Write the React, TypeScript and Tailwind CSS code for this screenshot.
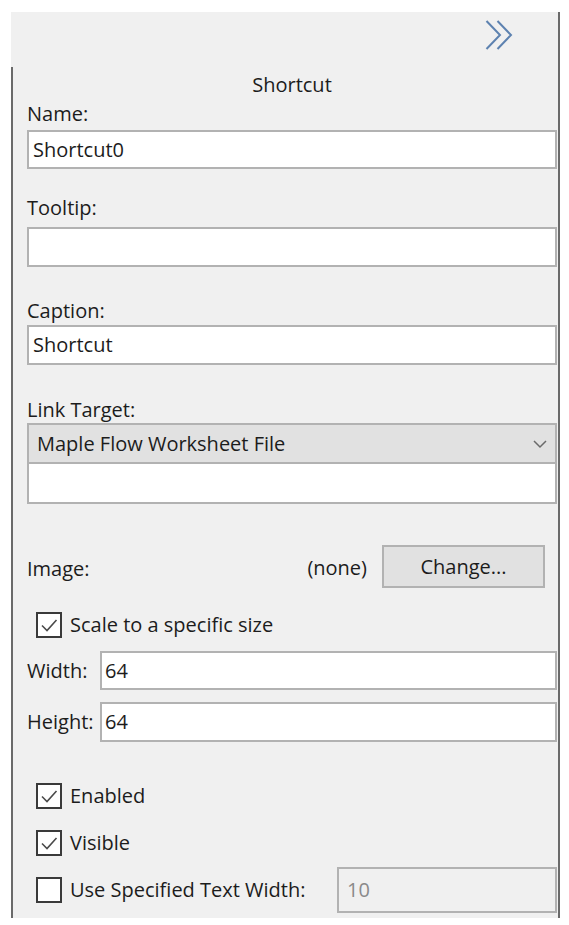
import React from "react";

const font = { fontFamily: '"Open Sans", "Noto Sans", sans-serif' };

function Check({ checked }: { checked: boolean }) {
  return (
    <div className="w-[26px] h-[26px] border-2 border-[#3a3a3a] bg-white flex items-center justify-center shrink-0">
      {checked && (
        <svg width="20" height="20" viewBox="0 0 20 20">
          <path d="M3 10.5 L8 15.5 L17.5 5" fill="none" stroke="#4a4a4a" strokeWidth="1.6" />
        </svg>
      )}
    </div>
  );
}

function Label({ children, className = "" }: { children: React.ReactNode; className?: string }) {
  return <div className={"h-[24px] leading-[24px] text-[20px] text-[#1c1c1c] " + className}>{children}</div>;
}

export default function App() {
  return (
    <div className="w-[569px] h-[925px] bg-white pt-[12px] pl-[11px]" style={font}>
      <div className="w-[549px] bg-[#f0f0f0] border-r-2 border-[#6a6a6a]">
        {/* top strip with collapse icon */}
        <div className="h-[55px] flex justify-end pr-[41px] pt-[8px]">
          <svg width="32" height="30" viewBox="0 0 32 30">
            <path d="M1.5 1 L15 15 L1.5 29" fill="none" stroke="#5d82b0" strokeWidth="2" />
            <path d="M12.5 1 L26 15 L12.5 29" fill="none" stroke="#5d82b0" strokeWidth="2" />
          </svg>
        </div>
        {/* body */}
        <div className="border-l-2 border-[#6a6a6a] pl-[14px] pr-[1px] pb-[5px] flex flex-col">
          <Label className="mt-[6px] text-center">Shortcut</Label>
          <Label className="mt-[5px]">Name:</Label>
          <div className="mt-[4px] h-[39px] bg-white border-2 border-[#b2b2b2] flex items-center pl-[4px] text-[20px] text-[#1c1c1c]">
            Shortcut0
          </div>
          <Label className="mt-[27px]">Tooltip:</Label>
          <div className="mt-[7px] h-[40px] bg-white border-2 border-[#b2b2b2]" />
          <Label className="mt-[32px]">Caption:</Label>
          <div className="mt-[2px] h-[40px] bg-white border-2 border-[#b2b2b2] flex items-center pl-[4px] text-[20px] text-[#1c1c1c]">
            Shortcut
          </div>
          <Label className="mt-[33px]">Link Target:</Label>
          <div className="mt-[1px] h-[41px] bg-[#e1e1e1] border-2 border-[#b2b2b2] flex items-center justify-between pl-[8px] pr-[8px] text-[20px] text-[#1c1c1c]">
            <span>Maple Flow Worksheet File</span>
            <svg width="14" height="10" viewBox="0 0 14 10">
              <path d="M1 2 L7 8 L13 2" fill="none" stroke="#6a6a6a" strokeWidth="1.5" />
            </svg>
          </div>
          <div className="h-[40px] bg-white border-2 border-t-0 border-[#b2b2b2]" />
          <div className="mt-[41px] h-[43px] flex items-center">
            <div className="flex-1 text-[20px] text-[#1c1c1c] pt-[4px]">Image:</div>
            <span className="text-[20px] text-[#1c1c1c] mr-[15px] pt-[2px]">(none)</span>
            <div className="w-[163px] h-[43px] mr-[12px] bg-[#e1e1e1] border-2 border-[#b2b2b2] flex items-center justify-center text-[20px] text-[#1c1c1c]">
              Change...
            </div>
          </div>
          <div className="mt-[24px] h-[26px] flex items-center pl-[9px] gap-[8px]">
            <Check checked />
            <span className="text-[20px] text-[#1c1c1c]">Scale to a specific size</span>
          </div>
          <div className="mt-[13px] h-[39px] flex items-center">
            <span className="w-[73px] text-[20px] text-[#1c1c1c]">Width:</span>
            <div className="flex-1 h-full bg-white border-2 border-[#b2b2b2] flex items-center pl-[3px] text-[20px] text-[#1c1c1c]">64</div>
          </div>
          <div className="mt-[12px] h-[40px] flex items-center">
            <span className="w-[73px] text-[20px] text-[#1c1c1c]">Height:</span>
            <div className="flex-1 h-full bg-white border-2 border-[#b2b2b2] flex items-center pl-[3px] text-[20px] text-[#1c1c1c]">64</div>
          </div>
          <div className="mt-[41px] h-[25px] flex items-center pl-[9px] gap-[8px]">
            <Check checked />
            <span className="text-[20px] text-[#1c1c1c]">Enabled</span>
          </div>
          <div className="mt-[22px] h-[25px] flex items-center pl-[9px] gap-[8px]">
            <Check checked />
            <span className="text-[20px] text-[#1c1c1c]">Visible</span>
          </div>
          <div className="mt-[12px] h-[46px] flex items-center pl-[9px] gap-[8px]">
            <Check checked={false} />
            <span className="text-[20px] text-[#1c1c1c] w-[259px]">Use Specified Text Width:</span>
            <div className="flex-1 h-full bg-[#f0f0f0] border-2 border-[#b2b2b2] flex items-center pl-[8px] text-[20px] text-[#8a8a8a]">10</div>
          </div>
        </div>
      </div>
    </div>
  );
}
